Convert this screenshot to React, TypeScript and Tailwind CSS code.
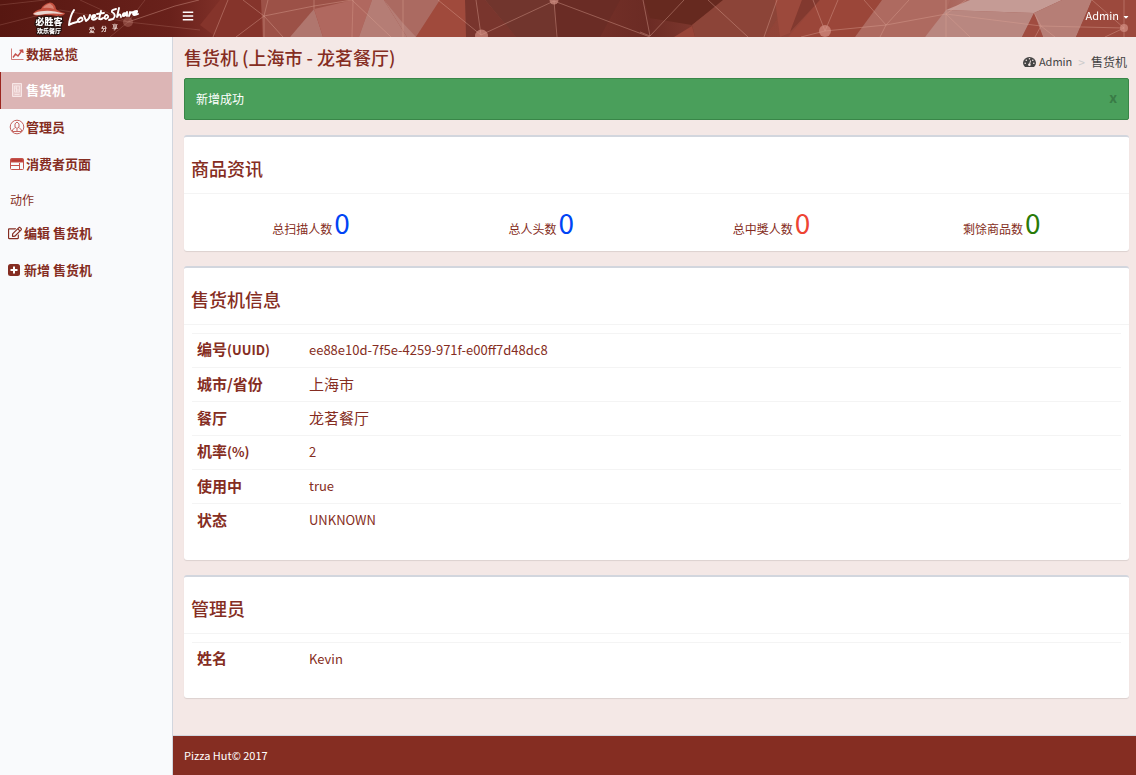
import { FaBars, FaCaretDown, FaRegEdit } from "react-icons/fa";
import type { ReactNode } from "react";

function HeaderArt() {
  return (
    <svg className="absolute inset-0 h-full w-full" viewBox="0 0 1136 37" preserveAspectRatio="none" aria-hidden="true">
      <defs>
        <linearGradient id="base" x1="0" x2="1" y1="0" y2="0">
          <stop offset="0" stopColor="#571711" />
          <stop offset="0.15" stopColor="#69211b" />
          <stop offset="0.22" stopColor="#8b382f" />
          <stop offset="0.3" stopColor="#a45349" />
          <stop offset="0.4" stopColor="#a9594d" />
          <stop offset="0.47" stopColor="#7c352c" />
          <stop offset="0.57" stopColor="#6b2b24" />
          <stop offset="0.65" stopColor="#8f4337" />
          <stop offset="0.78" stopColor="#98463a" />
          <stop offset="0.85" stopColor="#ae6d64" />
          <stop offset="1" stopColor="#963f34" />
        </linearGradient>
      </defs>
      <rect width="1136" height="37" fill="url(#base)" />
      <path d="M200 25 216 37H262L261 0H220z" fill="#85342b" />
      <path d="M261 0H353L314 10 290 37H263z" fill="#9c5147" />
      <path d="M314 9 290 37H323z" fill="#b0766e" />
      <path d="M314 9 353 0 352 37H323z" fill="#b0685f" />
      <path d="M353 0H372L359 37H352z" fill="#b0685f" />
      <path d="M372 0H384L407 37H359z" fill="#b57d75" />
      <path d="M384 0H440L416 37H407z" fill="#ab6a61" />
      <path d="M384 0 407 37H416L402 22z" fill="#b57d75" />
      <path d="M440 0H465L466 37H416z" fill="#a04a3c" />
      <path d="M465 0H485L516 37H466z" fill="#79352d" />
      <path d="M485 0H555L556 37H516z" fill="#71352d" />
      <path d="M555 0H620L600 37H556z" fill="#6a2c25" />
      <path d="M644 0H725L692 25 650 18z" fill="#66291f" />
      <path d="M692 25 723 0H790L765 37H695z" fill="#8c4438" />
      <path d="M692 26 695 37H674z" fill="#984538" />
      <path d="M775 0H802L790 33 780 37z" fill="#9c493c" />
      <path d="M802 0H820L790 32z" fill="#82392f" />
      <path d="M820 0H882L855 37H788z" fill="#9b4639" />
      <path d="M882 0H950L946 13 925 37H855z" fill="#ae6a60" />
      <path d="M946 10 970 0H1062L1034 13z" fill="#c59b95" />
      <path d="M946 10 1034 13 1022 37H925z" fill="#b98780" />
      <path d="M1034 13 1062 0H1092L1076 37H1043z" fill="#b67e76" />
      <path d="M1034 13 1043 37H1022z" fill="#a04c40" />
      <path d="M1092 0H1136V37H1076z" fill="#9c493d" />
      <g stroke="#dba193" strokeWidth="1" opacity="0.42" fill="none">
        <path d="M128 22 175 6 199 0M228 0 213 37M243 0 264 16 283 37M268 0 264 16V37M264 16 314 6 352 0 391 37M236 37 264 16M314 0V9M353 0 352 37M403 0V37M438 0 481 35M476 0 481 35 554 1 650 37M554 1 557 37M643 0 650 36 684 0M640 32 650 36M708 0 748 37M777 0 764 37M813 0 825 31M838 0 825 31M801 37 825 31 886 25 946 14 1041 26 1124 28M864 0 886 25 909 0M886 25 880 37M946 0V37M946 14 970 37M946 14 966 0M1034 13 1041 26 1055 37M1041 26 1035 37M1092 0 1124 28M1124 0V37M1124 28 1105 37" />
        <path opacity=".5" d="M80 0 128 22 200 30M128 22 110 37M128 22 145 0M0 5 45 0M0 25 60 10 128 22" />
      </g>
      <g fill="#d8968a" opacity="0.65">
        <circle cx="128" cy="22" r="5" opacity=".5" />
        <circle cx="481.500" cy="36" r="6.500" />
        <circle cx="554" cy="0" r="4.500" />
        <circle cx="825" cy="31" r="6" />
        <circle cx="1124" cy="28" r="4" />
      </g>
    </svg>
  );
}

function Logo() {
  return (
    <svg className="relative h-9 w-[144px]" viewBox="0 0 144 36" role="img" aria-label="Pizza Hut">
      <path d="M33 13Q34 10 41 8Q43 3 50 1.500Q55 2 56 8Q59 11 65 12Q65 15 57 15Q48 13 41 14Q35 16 33 13z" fill="#c4503f" />
      <path d="M43 7Q45 3.500 50 2.500Q53 4 54 8Q48 6 43 7z" fill="#d98475" />
      <path d="M33 13Q37 10 44 10Q52 9 64 13Q52 12 45 13Q37 15 33 13z" fill="#ead6d0" />
      <g fill="#fff" stroke="#241310" strokeWidth="2" paintOrder="stroke" fontFamily="Noto Sans CJK SC, sans-serif" fontWeight="900" textAnchor="middle">
        <text x="49" y="23.500" fontSize="9">必胜客</text>
        <text x="49" y="32" fontSize="6">欢乐餐厅</text>
      </g>
      <g fill="none" stroke="#fff" strokeLinecap="round" strokeLinejoin="round">
        <path strokeWidth="2" d="M74 9Q70 15 69 24Q72 22 77 21M80 17Q76 20 79 21Q84 20 82 17Q81 16 80 17M84 15 86 20Q90 17 90 14M92 17Q96 16 95 14Q91 14 92 18Q94 20 97 17" />
        <path strokeWidth="1.900" d="M101 10 99 18Q101 19 103 17M97 13 104 12M106 14Q103 17 106 18Q110 16 107 14M116 8Q111 9 112 11Q117 14 113 18L109 19M119 7 117 16Q120 11 121 16M126 12Q122 12 123 15Q126 15 127 11V15M130 11 129 15Q130 12 132 11M133 13Q138 12 137 10Q133 10 133 13Q134 15 138 13" />
      </g>
      <g fill="#f5e4df" fontFamily="Noto Sans CJK SC, sans-serif" fontSize="6" fontWeight="700">
        <text x="89" y="31">爱</text><text x="101" y="30">分</text><text x="112" y="28">享</text>
      </g>
    </svg>
  );
}

function ChartIcon() {
  return <svg className="size-4" viewBox="0 0 16 16" fill="none" stroke="#c4524c" aria-hidden="true"><path d="M2.500 2.500v11H14.500" opacity=".75" /><path d="m4 11.500 2.500-3.500 2.500 2 4-5.500M10.500 4.500 13.500 4l.5 3" strokeWidth="1.400" /></svg>;
}
function DocumentIcon() {
  return <svg className="size-4" viewBox="0 0 16 16" fill="none" stroke="#f7e7e7" aria-hidden="true"><path d="M3.500 1.500h9v13h-9z" fill="#e9cccc" /><path d="M5.500 4h5v6h-5zM5.500 6h2v2h3M7.500 4v6M5.500 12.500h5" opacity=".8" /></svg>;
}
function PersonIcon() {
  return <svg className="size-4" viewBox="0 0 16 16" fill="none" stroke="#c4625e" aria-hidden="true"><circle cx="8" cy="8" r="6.800" /><path d="M6 5Q8 1.500 10 5V8Q8 11 6 8zM6 8.500 3.500 11v1.500h9V11L10 8.500M8 10v2" /></svg>;
}
function PageIcon() {
  return <svg className="size-4" viewBox="0 0 16 16" fill="none" stroke="#c4524c" aria-hidden="true"><rect x="1.500" y="2.500" width="13" height="11" rx="1" /><path d="M2 3h12v3H2z" fill="#b93831" /><path d="M2 9.500h8M10.500 7v6" /></svg>;
}
function PlusIcon() {
  return <svg className="size-3" viewBox="0 0 12 12" aria-hidden="true"><rect width="12" height="12" rx="2.500" fill="currentColor" /><path d="M6 2.500v7M2.500 6h7" stroke="#fff" strokeWidth="2" /></svg>;
}
function DashboardIcon() {
  return (
    <svg className="h-3 w-[13px]" viewBox="0 0 13 12" aria-hidden="true">
      <path d="M2 11Q0 9 0 7A6.500 6 0 0 1 13 7Q13 9 11 11Z" fill="currentColor" />
      <g fill="#f4e8e6"><circle cx="2.200" cy="7.300" r=".8" /><circle cx="3.300" cy="4.300" r=".8" /><circle cx="6.500" cy="2.800" r=".8" /><circle cx="9.800" cy="4.300" r=".8" /><circle cx="10.800" cy="7.300" r=".8" /></g>
      <path d="M7.600 4.500 6.500 8.500" stroke="#f4e8e6" /><circle cx="6.400" cy="8.700" r="1.300" fill="#f4e8e6" />
    </svg>
  );
}

const navItems = [
  { label: "数据总揽", icon: <ChartIcon /> },
  { label: "售货机", icon: <DocumentIcon />, active: true },
  { label: "管理员", icon: <PersonIcon /> },
  { label: "消费者页面", icon: <PageIcon /> },
];

const stats = [
  { label: "总扫描人数", color: "text-[#0044f5]" },
  { label: "总人头数", color: "text-[#0044f5]" },
  { label: "总中獎人数", color: "text-[#ee4433]" },
  { label: "剩馀商品数", color: "text-[#2a7a08]" },
];

const machine: Row[] = [
  { name: "编号", suffix: "(UUID)", value: "ee88e10d-7f5e-4259-971f-e00ff7d48dc8", latin: true },
  { name: "城市/省份", value: "上海市" },
  { name: "餐厅", value: "龙茗餐厅" },
  { name: "机率", suffix: "(%)", value: "2", latin: true },
  { name: "使用中", value: "true", latin: true },
  { name: "状态", value: "UNKNOWN", latin: true },
];

type Row = { name: string; suffix?: string; value: string; latin?: boolean };

function Panel({ title, children }: { title: string; children: ReactNode }) {
  return (
    <section className="mb-[15px] rounded-[3px] border-t-2 border-[#d2d6de] bg-white shadow-[0_1px_1px_rgba(0,0,0,0.1)]">
      <h2 className="border-b border-[#f4f4f4] px-[7px] pt-[18px] pb-3 text-lg leading-[26px] font-medium">{title}</h2>
      {children}
    </section>
  );
}

function Details({ rows }: { rows: Row[] }) {
  return (
    <div className="px-2 pt-2 pb-[22px]">
      <table className="w-full table-fixed border-collapse text-left">
        <tbody>
          {rows.map((row) => (
            <tr key={row.name} className="h-[34px] border-t border-[#f4f4f4]">
              <th scope="row" className="w-28 px-[5px] pt-0 pb-[2px] text-[15px] leading-5 font-bold">{row.name}{row.suffix && <span className="text-[13px]">{row.suffix}</span>}</th>
              <td className={row.latin ? "px-[5px] pt-0 pb-px text-[13px] leading-5" : "px-[5px] pt-0 pb-[2px] text-[15px] leading-5"}>{row.value}</td>
            </tr>
          ))}
        </tbody>
      </table>
    </div>
  );
}

export default function App() {
  return (
    <div className="flex min-h-screen flex-col bg-[#f4e8e6] font-['Noto_Sans_CJK_SC',sans-serif] text-xs text-[#852d22]">
      <header className="relative flex h-[37px] items-center justify-between overflow-hidden text-white">
        <HeaderArt />
        <div className="relative flex h-full items-center">
          <a href="#home" className="w-[172px]"><Logo /></a>
          <button type="button" aria-label="Toggle navigation" className="flex size-8 items-center justify-center pb-[6px]"><FaBars size={12} /></button>
        </div>
        <button type="button" className="relative flex items-center gap-[3px] pr-[6px] pb-[6px] text-[11px]">Admin <FaCaretDown size={8} className="mt-[2px]" /></button>
      </header>
      <div className="flex flex-1">
        <aside className="w-[173px] shrink-0 border-r border-[#d2d6de] bg-[#f9fafc]">
          <nav>
            {navItems.map((item) => (
              <a key={item.label} href="#" className={item.active ? "flex h-[37px] items-center gap-px border-l border-[#9b251f] bg-[#dcb5b5] pb-[2px] pl-2 text-[13px] font-bold text-white" : "flex h-[37px] items-center gap-px pb-[2px] pl-[9px] text-[13px] font-bold first:h-[35px]"}>
                {item.icon}<span>{item.label}</span>
              </a>
            ))}
            <h2 className="flex h-[33px] items-center px-[10px]">动作</h2>
            <a href="#edit" className="flex h-[37px] items-center gap-[2px] pb-1 pl-2 text-[13px] font-bold"><FaRegEdit size={14} />编辑 售货机</a>
            <a href="#add" className="flex h-[37px] items-center gap-1 pb-1 pl-2 text-[13px] font-bold"><PlusIcon />新增 售货机</a>
          </nav>
        </aside>
        <div className="flex min-w-0 flex-1 flex-col">
          <main className="flex-1 px-[7px] pl-[11px]">
            <div className="flex h-[41px] items-center justify-between">
              <h1 className="pb-[2px] text-lg font-medium">售货机 (上海市 - 龙茗餐厅)</h1>
              <nav aria-label="Breadcrumb" className="flex items-center pt-2 pr-[2px] text-[#444]">
                <a href="#admin" className="flex items-center gap-[3px] text-[11px]"><DashboardIcon />Admin</a>
                <span className="px-[6px] text-xs text-[#ccc]">&gt;</span><span>售货机</span>
              </nav>
            </div>
            <div role="status" className="mb-[15px] flex h-[42px] items-center justify-between rounded-[2px] border border-[#398648] bg-[#4a9f5b] px-[11px] text-white">
              <span>新增成功</span><button type="button" aria-label="Close" className="pb-1 text-sm font-bold text-[#397b46]">x</button>
            </div>
            <Panel title="商品资讯">
              <div className="grid h-[57px] grid-cols-4 px-3">
                {stats.map((stat) => (
                  <div key={stat.label} className="flex items-baseline justify-center gap-[2px] pt-[6px]">
                    <span>{stat.label}</span><span className={`${stat.color} text-[28px] leading-[44px]`}>0</span>
                  </div>
                ))}
              </div>
            </Panel>
            <Panel title="售货机信息"><Details rows={machine} /></Panel>
            <Panel title="管理员"><Details rows={[{ name: "姓名", value: "Kevin", latin: true }]} /></Panel>
          </main>
          <footer className="border-t border-[#d2d6de] bg-[#852d22] px-[11px] pt-[10px] pb-[11px] text-[11px] leading-[18px] text-white">Pizza Hut© 2017</footer>
        </div>
      </div>
    </div>
  );
}
